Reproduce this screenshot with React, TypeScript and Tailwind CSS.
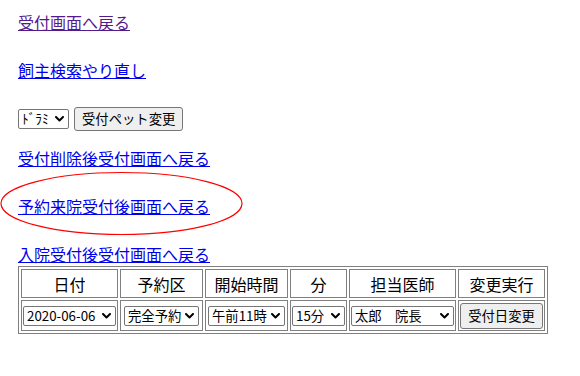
import React from "react";

const FONT = { fontFamily: '"Noto Sans CJK JP", "Noto Sans", sans-serif' };

function Chevron() {
  return (
    <svg width="9" height="6" viewBox="0 0 9 6" className="shrink-0">
      <path d="M1 1 L4.5 4.5 L8 1" fill="none" stroke="#000" strokeWidth="2" strokeLinecap="round" strokeLinejoin="round" />
    </svg>
  );
}

function FakeSelect({ label, w, gap = "gap-1" }: { label: string; w: string; gap?: string }) {
  return (
    <div
      className={`${w} h-[20px] flex items-center justify-between ${gap} border border-[#767676] rounded-[2px] bg-white pl-[3px] pr-[4px] text-[13.33px] leading-none text-black`}
    >
      <span className="whitespace-pre">{label}</span>
      <Chevron />
    </div>
  );
}

export default function App() {
  return (
    <div className="relative w-[580px] h-[376px] bg-white text-[16px]" style={FONT}>
      <svg className="absolute left-0 top-0 pointer-events-none" width="580" height="376">
        <ellipse cx="121.5" cy="203.5" rx="120.5" ry="31" fill="none" stroke="#ff0000" strokeWidth="1.2" />
      </svg>
      <div className="pl-[18px] pt-[10px] flex flex-col">
        <div className="h-[24px] leading-[24px]">
          <a href="#" className="text-[#551a8b] underline">受付画面へ戻る</a>
        </div>
        <div className="h-[24px]" />
        <div className="h-[24px] leading-[24px]">
          <a href="#" className="text-[#0000ee] underline">飼主検索やり直し</a>
        </div>
        <div className="h-[24px]" />
        <div className="h-[26px] flex items-center gap-[5px]">
          <FakeSelect label="ﾄﾞﾗﾐ" w="w-[51px]" />
          <button className="h-[24px] px-[7px] border border-[#767676] rounded-[3px] bg-[#efefef] text-[13.33px] leading-none text-black">
            受付ペット変更
          </button>
        </div>
        <div className="h-[14px]" />
        <div className="h-[24px] leading-[24px]">
          <a href="#" className="text-[#0000ee] underline">受付削除後受付画面へ戻る</a>
        </div>
        <div className="h-[24px]" />
        <div className="h-[24px] leading-[24px]">
          <a href="#" className="text-[#0000ee] underline">予約来院受付後画面へ戻る</a>
        </div>
        <div className="h-[24px]" />
        <div className="h-[24px] leading-[24px]">
          <a href="#" className="text-[#0000ee] underline">入院受付後受付画面へ戻る</a>
        </div>
        <table className="border-separate border-spacing-[2px] border border-[#808080] w-[530px]">
          <tbody>
            <tr className="h-[29px]">
              <td className="border border-[#808080] w-[97px] text-center leading-none">日付</td>
              <td className="border border-[#808080] w-[83px] text-center leading-none">予約区</td>
              <td className="border border-[#808080] w-[83px] text-center leading-none">開始時間</td>
              <td className="border border-[#808080] w-[57px] text-center leading-none">分</td>
              <td className="border border-[#808080] w-[107px] text-center leading-none">担当医師</td>
              <td className="border border-[#808080] w-[87px] text-center leading-none">変更実行</td>
            </tr>
            <tr className="h-[31px]">
              <td className="border border-[#808080] px-[1px]">
                <FakeSelect label="2020-06-06" w="w-[93px]" />
              </td>
              <td className="border border-[#808080] px-[1px]">
                <div className="flex justify-center">
                  <FakeSelect label="完全予約" w="w-[75px]" />
                </div>
              </td>
              <td className="border border-[#808080] px-[1px]">
                <div className="flex justify-center">
                  <FakeSelect label="午前11時" w="w-[77px]" />
                </div>
              </td>
              <td className="border border-[#808080] px-[1px]">
                <div className="flex justify-center">
                  <FakeSelect label="15分" w="w-[53px]" />
                </div>
              </td>
              <td className="border border-[#808080] px-[1px]">
                <div className="flex justify-center">
                  <FakeSelect label="太郎　院長" w="w-[103px]" />
                </div>
              </td>
              <td className="border border-[#808080] p-0">
                <div className="flex justify-center">
                  <button className="w-[83px] h-[26px] border border-[#767676] rounded-[3px] bg-[#efefef] text-[13.33px] leading-none text-black">
                    受付日変更
                  </button>
                </div>
              </td>
            </tr>
          </tbody>
        </table>
      </div>
    </div>
  );
}
